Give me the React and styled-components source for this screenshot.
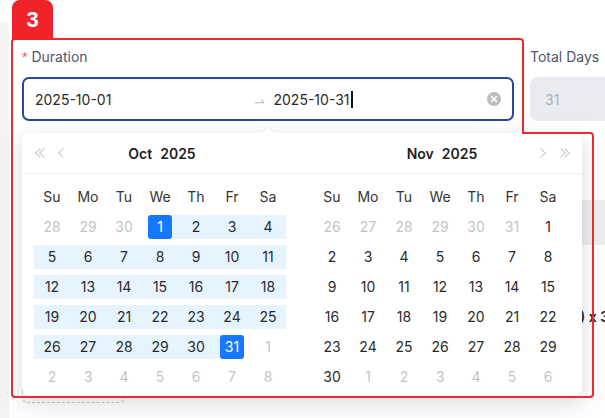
import styled, { createGlobalStyle } from 'styled-components';

const GlobalStyle = createGlobalStyle`
  html, body {
    margin: 0;
    padding: 0;
    background: #ffffff;
  }
  * {
    box-sizing: border-box;
  }
`;

const WEEKDAYS = ['Su', 'Mo', 'Tu', 'We', 'Th', 'Fr', 'Sa'];
const MONTHS = ['Jan', 'Feb', 'Mar', 'Apr', 'May', 'Jun', 'Jul', 'Aug', 'Sep', 'Oct', 'Nov', 'Dec'];

const RANGE_START = new Date(2025, 9, 1).getTime();
const RANGE_END = new Date(2025, 9, 31).getTime();

// 6 weeks of cells for a month, starting on the Sunday before the 1st
const buildMonth = (year, month) => {
  const first = new Date(year, month, 1);
  const start = new Date(year, month, 1 - first.getDay());
  const cells = [];
  for (let i = 0; i < 42; i++) {
    const d = new Date(start.getFullYear(), start.getMonth(), start.getDate() + i);
    const t = d.getTime();
    const inView = d.getMonth() === month;
    cells.push({
      key: t,
      day: d.getDate(),
      inView,
      isStart: inView && t === RANGE_START,
      isEnd: inView && t === RANGE_END,
      inRange: inView && t > RANGE_START && t < RANGE_END,
    });
  }
  return cells;
};

const Page = styled.div`
  position: relative;
  width: 605px;
  height: 418px;
  overflow: hidden;
  display: flex;
  background: #ffffff;
  font-family: Inter, 'Noto Sans', sans-serif;
`;

const Gutter = styled.div`
  width: 9px;
  flex-shrink: 0;
  margin-top: 22px;
  background: #f4f4f5;
`;

const Main = styled.div`
  flex: 1;
  display: flex;
  flex-direction: column;
  padding: 46px 0 0 13px;
  min-width: 0;
`;

const FieldRow = styled.div`
  display: flex;
  gap: 16px;
`;

const Field = styled.div`
  display: flex;
  flex-direction: column;
  width: ${(p) => p.$width || 'auto'};
  flex-shrink: 0;
`;

const Label = styled.div`
  height: 22px;
  line-height: 22px;
  margin-bottom: 9px;
  font-size: 14px;
  color: #51566a;
  white-space: nowrap;
`;

const Required = styled.span`
  color: #ff4d4f;
  margin-right: 4px;
  font-family: SimSun, 'Liberation Sans', sans-serif;
`;

const RangeBox = styled.div`
  position: relative;
  display: flex;
  align-items: center;
  height: 44px;
  padding: 0 11px;
  border: 2px solid #27479b;
  border-radius: 7px;
  background: #ffffff;
`;

const InputText = styled.div`
  flex: 1;
  font-size: 14px;
  color: #2a2a2a;
  white-space: nowrap;
  display: flex;
  align-items: center;
`;

const Caret = styled.span`
  display: inline-block;
  width: 2px;
  height: 17px;
  margin-left: 1px;
  background: #111111;
`;

const Separator = styled.span`
  display: flex;
  align-items: center;
  padding: 4px 8px 0;
  color: #b0b0b0;
`;

const ClearIcon = styled.span`
  display: flex;
  margin-left: 4px;
`;

const ActiveBar = styled.div`
  position: absolute;
  bottom: -2px;
  left: 235px;
  width: 208px;
  height: 2px;
  background: #2a4ca3;
`;

const DisabledBox = styled.div`
  width: 120px;
  height: 44px;
  display: flex;
  align-items: center;
  padding: 0 15px;
  border-radius: 8px;
  background: #eaebf0;
  color: #a9adbd;
  font-size: 14px;
`;

const TableHead = styled.div`
  margin-top: 79px;
  height: 45px;
  background: #eceef1;
`;

const TableRow = styled.div`
  height: 126px;
  padding: 61px 0 0 538px;
`;

const RowText = styled.span`
  display: block;
  line-height: 22px;
  font-size: 14px;
  font-weight: 600;
  color: #222222;
  white-space: nowrap;
`;

const AddButton = styled.div`
  width: 103px;
  height: 32px;
  border: 1px dashed #c9c9c9;
  border-radius: 6px;
`;

const Popup = styled.div`
  position: absolute;
  left: 22px;
  top: 133px;
  z-index: 10;
  display: flex;
  width: 560px;
  background: #ffffff;
  border-radius: 8px;
  box-shadow: 0 6px 16px 0 rgba(0, 0, 0, 0.08), 0 3px 6px -4px rgba(0, 0, 0, 0.12),
    0 9px 28px 8px rgba(0, 0, 0, 0.05);

  &::before {
    content: '';
    position: absolute;
    top: -5px;
    left: 240px;
    width: 0;
    height: 0;
    border-left: 6px solid transparent;
    border-right: 6px solid transparent;
    border-bottom: 5px solid #ffffff;
    filter: drop-shadow(0 -1px 1px rgba(0, 0, 0, 0.06));
  }
`;

const Panel = styled.div`
  width: 280px;
  display: flex;
  flex-direction: column;
`;

const PanelHeader = styled.div`
  display: flex;
  align-items: center;
  height: 41px;
  padding: 0 8px;
  border-bottom: 1px solid #f0f0f0;
`;

const NavButton = styled.span`
  position: relative;
  width: 22px;
  height: 40px;
  flex-shrink: 0;
  visibility: ${(p) => (p.$hidden ? 'hidden' : 'visible')};

  &::before,
  &::after {
    content: '';
    position: absolute;
    top: 50%;
    width: 6px;
    height: 6px;
    border-style: solid;
    border-color: #c8c8c8;
    border-width: 1.5px 0 0 1.5px;
    transform: ${(p) =>
      p.$dir === 'next' ? 'translate(-50%, -50%) rotate(135deg)' : 'translate(-50%, -50%) rotate(-45deg)'};
  }

  &::before {
    left: ${(p) => (p.$double ? (p.$dir === 'next' ? '9px' : '10px') : '11px')};
  }

  &::after {
    display: ${(p) => (p.$double ? 'block' : 'none')};
    left: ${(p) => (p.$dir === 'next' ? '13px' : '14px')};
  }
`;

const Title = styled.div`
  flex: 1;
  display: flex;
  justify-content: center;
  gap: 8px;
  font-size: 14px;
  font-weight: 600;
  color: #222222;
`;

const PanelBody = styled.div`
  padding: 8px 12px 4px;
`;

const WeekGrid = styled.div`
  display: grid;
  grid-template-columns: repeat(7, 36px);
`;

const WeekdayCell = styled.div`
  height: 30px;
  line-height: 30px;
  text-align: center;
  font-size: 14px;
  color: #333333;
`;

const DayCell = styled.div`
  position: relative;
  height: 30px;
  display: flex;
  align-items: center;
  justify-content: center;

  &::before {
    content: '';
    display: ${(p) => (p.$band ? 'block' : 'none')};
    position: absolute;
    top: 3px;
    height: 24px;
    left: ${(p) => (p.$start ? '50%' : '0')};
    right: ${(p) => (p.$end ? '50%' : '0')};
    background: #e6f4ff;
  }
`;

const DayInner = styled.span`
  position: relative;
  min-width: 24px;
  height: 24px;
  line-height: 24px;
  text-align: center;
  border-radius: 3px;
  font-size: 14px;
  background: ${(p) => (p.$selected ? '#1677ff' : 'transparent')};
  color: ${(p) => (p.$selected ? '#ffffff' : p.$muted ? '#c4c4c4' : '#2a2a2a')};
`;

const Annotation = styled.svg`
  position: absolute;
  left: 0;
  top: 0;
  z-index: 20;
  pointer-events: none;
`;

const Tag = styled.div`
  position: absolute;
  left: 12px;
  top: 0;
  z-index: 21;
  width: 41px;
  height: 40px;
  display: flex;
  align-items: center;
  justify-content: center;
  border-radius: 8px 8px 0 0;
  background: #ef2329;
  color: #ffffff;
  font-family: 'Liberation Sans', Arial, sans-serif;
  font-weight: 700;
  font-size: 22px;
`;

const SwapRight = () => (
  <svg width="13" height="13" viewBox="0 0 1024 1024" fill="#b3b3b3">
    <path d="M873.1 596.2l-164-208A32 32 0 00684 376h-64.8c-6.7 0-10.4 7.7-6.3 13l144.3 183H152c-4.4 0-8 3.6-8 8v60c0 4.4 3.6 8 8 8h695.9c26.8 0 41.7-30.8 25.2-51.8z" />
  </svg>
);

const ClearGlyph = () => (
  <svg width="14" height="14" viewBox="0 0 14 14">
    <circle cx="7" cy="7" r="7" fill="#bdbdbd" />
    <path d="M4.6 4.6l4.8 4.8M9.4 4.6l-4.8 4.8" stroke="#ffffff" strokeWidth="1.5" strokeLinecap="round" />
  </svg>
);

const MonthPanel = ({ year, month, side }) => {
  const cells = buildMonth(year, month);
  return (
    <Panel>
      <PanelHeader>
        <NavButton $dir="prev" $double $hidden={side === 'right'} />
        <NavButton $dir="prev" $hidden={side === 'right'} />
        <Title>
          <span>{MONTHS[month]}</span>
          <span>{year}</span>
        </Title>
        <NavButton $dir="next" $hidden={side === 'left'} />
        <NavButton $dir="next" $double $hidden={side === 'left'} />
      </PanelHeader>
      <PanelBody>
        <WeekGrid>
          {WEEKDAYS.map((w) => (
            <WeekdayCell key={w}>{w}</WeekdayCell>
          ))}
          {cells.map((c) => (
            <DayCell
              key={c.key}
              $band={c.inRange || c.isStart || c.isEnd}
              $start={c.isStart}
              $end={c.isEnd}
            >
              <DayInner $muted={!c.inView} $selected={c.isStart || c.isEnd}>
                {c.day}
              </DayInner>
            </DayCell>
          ))}
        </WeekGrid>
      </PanelBody>
    </Panel>
  );
};

export default function App() {
  return (
    <>
      <GlobalStyle />
      <Page>
        <Gutter />
        <Main>
          <FieldRow>
            <Field $width="492px">
              <Label>
                <Required>*</Required>Duration
              </Label>
              <RangeBox>
                <InputText>2025-10-01</InputText>
                <Separator>
                  <SwapRight />
                </Separator>
                <InputText>
                  2025-10-31
                  <Caret />
                </InputText>
                <ClearIcon>
                  <ClearGlyph />
                </ClearIcon>
                <ActiveBar />
              </RangeBox>
            </Field>
            <Field>
              <Label>Total Days</Label>
              <DisabledBox>31</DisabledBox>
            </Field>
          </FieldRow>
          <TableHead />
          <TableRow>
            <RowText>(31) x 31</RowText>
          </TableRow>
          <AddButton />
        </Main>

        <Popup>
          <MonthPanel year={2025} month={9} side="left" />
          <MonthPanel year={2025} month={10} side="right" />
        </Popup>

        <Annotation width="605" height="418" viewBox="0 0 605 418">
          <path
            d="M12 394 L12 42 Q12 39 15 39 L520 39 Q523 39 523 42 L523 133 L590 133 Q593 133 593 136 L593 394 Q593 397 590 397 L15 397 Q12 397 12 394 Z"
            fill="none"
            stroke="#ec2b2d"
            strokeWidth="2"
          />
        </Annotation>
        <Tag>3</Tag>
      </Page>
    </>
  );
}
